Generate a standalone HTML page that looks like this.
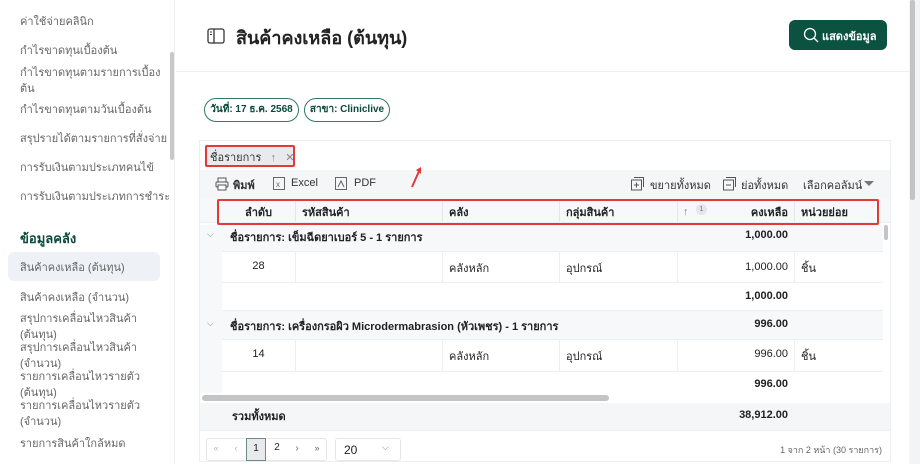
<!DOCTYPE html>
<html><head><meta charset="utf-8"><style>
*{box-sizing:border-box;margin:0;padding:0}
body{width:920px;height:464px;overflow:hidden;background:#fff;font-family:"Liberation Sans","Noto Sans CJK SC",sans-serif;position:relative;color:#222}
.a{position:absolute;white-space:nowrap}
.sb{font-size:11px;color:#666;left:20px;transform:translateY(-1px)}
.b{font-weight:bold}
.cell{position:absolute;font-size:11px;color:#222;white-space:nowrap;transform:translateY(-2px)}
</style></head><body>
<!-- sidebar -->
<div class="a" style="left:0;top:0;width:175px;height:464px;border-right:1px solid #eceef1"></div>
<div class="a" style="left:170px;top:52px;width:4px;height:108px;background:#c8c8c8;border-radius:2px"></div>
<div class="a sb" style="top:13px">ค่าใช้จ่ายคลินิก</div>
<div class="a sb" style="top:42px">กำไรขาดทุนเบื้องต้น</div>
<div class="a sb" style="top:64px">กำไรขาดทุนตามรายการเบื้อง</div>
<div class="a sb" style="top:80px">ต้น</div>
<div class="a sb" style="top:101px">กำไรขาดทุนตามวันเบื้องต้น</div>
<div class="a sb" style="top:130px">สรุปรายได้ตามรายการที่สั่งจ่าย</div>
<div class="a sb" style="top:159px">การรับเงินตามประเภทคนไข้</div>
<div class="a sb" style="top:188px">การรับเงินตามประเภทการชำระ</div>
<div class="a b" style="left:20px;top:228px;font-size:13px;color:#0b4a3a">ข้อมูลคลัง</div>
<div class="a" style="left:8px;top:252px;width:152px;height:29px;background:#eef1f5;border-radius:6px"></div>
<div class="a sb" style="top:259px">สินค้าคงเหลือ (ต้นทุน)</div>
<div class="a sb" style="top:289px">สินค้าคงเหลือ (จำนวน)</div>
<div class="a sb" style="top:310px">สรุปการเคลื่อนไหวสินค้า</div>
<div class="a sb" style="top:326px">(ต้นทุน)</div>
<div class="a sb" style="top:339px">สรุปการเคลื่อนไหวสินค้า</div>
<div class="a sb" style="top:355px">(จำนวน)</div>
<div class="a sb" style="top:368px">รายการเคลื่อนไหวรายตัว</div>
<div class="a sb" style="top:384px">(ต้นทุน)</div>
<div class="a sb" style="top:397px">รายการเคลื่อนไหวรายตัว</div>
<div class="a sb" style="top:413px">(จำนวน)</div>
<div class="a sb" style="top:435px">รายการสินค้าใกล้หมด</div>
<!-- page scrollbar -->
<div class="a" style="left:909px;top:0;width:11px;height:464px;background:#f3f4f6"></div>
<div class="a" style="left:910px;top:0;width:5px;height:200px;background:#c4c4c4;border-radius:2px"></div>
<!-- header -->
<div class="a" style="left:176px;top:71px;width:733px;height:1px;background:#eceef1"></div>
<svg class="a" style="left:207px;top:28px" width="18" height="16" viewBox="0 0 18 16"><rect x="1" y="1" width="16" height="14" rx="2" fill="none" stroke="#333" stroke-width="1.3"/><line x1="7" y1="1" x2="7" y2="15" stroke="#333" stroke-width="1.3"/><line x1="3" y1="4" x2="5" y2="4" stroke="#333"/><line x1="3" y1="6.5" x2="5" y2="6.5" stroke="#333"/></svg>
<div class="a b" style="left:236px;top:23px;font-size:18px;color:#222">สินค้าคงเหลือ (ต้นทุน)</div>
<div class="a" style="left:789px;top:20px;width:98px;height:30px;background:#0b5240;border-radius:6px"></div>
<svg class="a" style="left:803px;top:27px" width="16" height="16" viewBox="0 0 16 16"><circle cx="7" cy="7" r="5.5" fill="none" stroke="#fff" stroke-width="1.3"/><line x1="11" y1="11" x2="15" y2="15" stroke="#fff" stroke-width="1.3"/></svg>
<div class="a b" style="left:822px;top:27px;font-size:11px;color:#fff">แสดงข้อมูล</div>
<!-- chips -->
<div class="a b" style="left:204px;top:98px;width:95px;height:24px;border:1.3px solid #2f7a62;border-radius:12px;font-size:10px;color:#0b4a3a;text-align:center;line-height:21px">วันที่: 17 ธ.ค. 2568</div>
<div class="a b" style="left:304px;top:98px;width:86px;height:24px;border:1.3px solid #2f7a62;border-radius:12px;font-size:10px;color:#0b4a3a;text-align:center;line-height:21px">สาขา: Cliniclive</div>
<!-- table container -->
<div class="a" style="left:199px;top:140px;width:692px;height:322px;border:1px solid #eceef1"></div>
<div class="a" style="left:200px;top:170px;width:690px;height:29px;background:#f5f6f8"></div>
<div class="a" style="left:205px;top:145px;width:90px;height:22px;background:#e8eaee;border:2px solid #e53935;border-radius:2px"></div>
<div class="a" style="left:210px;top:148px;font-size:11px;color:#333">ชื่อรายการ&nbsp;&nbsp;&nbsp;<span style="color:#888">↑</span>&nbsp;&nbsp;&nbsp;<span style="color:#888">✕</span></div>
<svg class="a" style="left:408px;top:165px" width="16" height="24" viewBox="0 0 16 24"><line x1="4" y1="22" x2="12" y2="4" stroke="#e53935" stroke-width="2"/><path d="M8 5 L13 2 L13 9 Z" fill="#e53935"/></svg>
<!-- toolbar -->
<svg class="a" style="left:215px;top:177px" width="14" height="14" viewBox="0 0 14 14"><rect x="3" y="1" width="8" height="4" fill="none" stroke="#555"/><rect x="1" y="5" width="12" height="5" rx="1" fill="none" stroke="#555"/><rect x="3" y="8" width="8" height="5" fill="#fff" stroke="#555"/></svg>
<div class="a b" style="left:233px;top:176px;font-size:11px;color:#333">พิมพ์</div>
<svg class="a" style="left:273px;top:177px" width="12" height="13"><rect x="0.5" y="0.5" width="11" height="12" fill="none" stroke="#666"/><text x="3" y="10" font-size="8" fill="#666" font-family="Liberation Sans">x</text></svg>
<div class="a" style="left:291px;top:177px;font-size:11px;color:#333">Excel</div>
<svg class="a" style="left:335px;top:177px" width="12" height="13"><rect x="0.5" y="0.5" width="11" height="12" fill="none" stroke="#666"/><path d="M3 10 L6 4 L9 10" fill="none" stroke="#666"/></svg>
<div class="a" style="left:354px;top:177px;font-size:11px;color:#333">PDF</div>
<svg class="a" style="left:631px;top:177px" width="13" height="14"><rect x="0.5" y="3" width="10" height="10" fill="none" stroke="#555"/><path d="M3 0.5 H12.5 V10" fill="none" stroke="#555"/><path d="M5.5 5.5 V10.5 M3 8 H8" stroke="#555"/></svg>
<div class="a" style="left:650px;top:176px;font-size:11px;color:#333">ขยายทั้งหมด</div>
<svg class="a" style="left:723px;top:177px" width="13" height="14"><rect x="0.5" y="3" width="10" height="10" fill="none" stroke="#555"/><path d="M3 0.5 H12.5 V10" fill="none" stroke="#555"/><path d="M3 8 H8" stroke="#555"/></svg>
<div class="a" style="left:741px;top:176px;font-size:11px;color:#333">ย่อทั้งหมด</div>
<div class="a" style="left:803px;top:176px;font-size:11px;color:#333">เลือกคอลัมน์</div>
<svg class="a" style="left:864px;top:181px" width="10" height="6"><path d="M0 0 L10 0 L5 5Z" fill="#777"/></svg>
<!-- header row -->
<div class="a" style="left:200px;top:199px;width:690px;height:24px;background:#f7f8fa;border-bottom:1px solid #eceef1"></div>
<div class="a" style="left:295px;top:200px;width:1px;height:22px;background:#e4e6ea"></div>
<div class="a" style="left:442px;top:200px;width:1px;height:22px;background:#e4e6ea"></div>
<div class="a" style="left:559px;top:200px;width:1px;height:22px;background:#e4e6ea"></div>
<div class="a" style="left:677px;top:200px;width:1px;height:22px;background:#e4e6ea"></div>
<div class="a" style="left:794px;top:200px;width:1px;height:22px;background:#e4e6ea"></div>
<div class="cell b" style="left:222px;width:73px;top:205px;text-align:center">ลำดับ</div>
<div class="cell b" style="left:302px;top:205px">รหัสสินค้า</div>
<div class="cell b" style="left:449px;top:205px">คลัง</div>
<div class="cell b" style="left:566px;top:205px">กลุ่มสินค้า</div>
<div class="cell" style="left:683px;top:208px;color:#888">↑</div>
<div class="a" style="left:696px;top:204px;width:11px;height:11px;border-radius:6px;background:#e4e6ea;font-size:7px;color:#777;text-align:center;line-height:11px">1</div>
<div class="cell b" style="left:677px;width:111px;top:205px;text-align:right">คงเหลือ</div>
<div class="cell b" style="left:801px;top:205px">หน่วยย่อย</div>
<div class="a" style="left:217px;top:199px;width:662px;height:26px;border:2px solid #e53935;border-radius:2px"></div>
<div class="a" style="left:884px;top:225px;width:4px;height:15px;background:#c4c4c4;border-radius:2px"></div>
<!-- body -->
<div class="a" style="left:200px;top:225px;width:683px;height:169px;background:#f7f8fa"></div>
<!-- group1 -->
<div class="cell" style="left:207px;top:231px;color:#888;font-size:9px">⌵</div>
<div class="cell b" style="left:230px;top:230px">ชื่อรายการ: เข็มฉีดยาเบอร์ 5 - 1 รายการ</div>
<div class="cell b" style="left:677px;width:111px;top:231px;text-align:right">1,000.00</div>
<div class="a" style="left:222px;top:251px;width:661px;height:32px;background:#fff;border-top:1px solid #eceef1;border-bottom:1px solid #eceef1"></div>
<div class="a" style="left:222px;top:283px;width:661px;height:28px;background:#fff;border-bottom:1px solid #eceef1"></div>
<div class="cell" style="left:222px;width:73px;top:262px;text-align:center">28</div>
<div class="cell" style="left:449px;top:261px">คลังหลัก</div>
<div class="cell" style="left:566px;top:261px">อุปกรณ์</div>
<div class="cell" style="left:677px;width:111px;top:263px;text-align:right">1,000.00</div>
<div class="cell" style="left:801px;top:261px">ชิ้น</div>
<div class="cell b" style="left:677px;width:111px;top:292px;text-align:right">1,000.00</div>
<!-- group2 -->
<div class="cell" style="left:207px;top:320px;color:#888;font-size:9px">⌵</div>
<div class="cell b" style="left:230px;top:319px">ชื่อรายการ: เครื่องกรอผิว Microdermabrasion (หัวเพชร) - 1 รายการ</div>
<div class="cell b" style="left:677px;width:111px;top:320px;text-align:right">996.00</div>
<div class="a" style="left:222px;top:339px;width:661px;height:33px;background:#fff;border-top:1px solid #eceef1;border-bottom:1px solid #eceef1"></div>
<div class="a" style="left:222px;top:372px;width:661px;height:22px;background:#fff"></div>
<div class="cell" style="left:222px;width:73px;top:350px;text-align:center">14</div>
<div class="cell" style="left:449px;top:349px">คลังหลัก</div>
<div class="cell" style="left:566px;top:349px">อุปกรณ์</div>
<div class="cell" style="left:677px;width:111px;top:350px;text-align:right">996.00</div>
<div class="cell" style="left:801px;top:349px">ชิ้น</div>
<div class="cell b" style="left:677px;width:111px;top:380px;text-align:right">996.00</div>
<!-- row grid lines -->
<div class="a" style="left:295px;top:251px;width:1px;height:32px;background:#eceef1"></div>
<div class="a" style="left:442px;top:251px;width:1px;height:32px;background:#eceef1"></div>
<div class="a" style="left:559px;top:251px;width:1px;height:32px;background:#eceef1"></div>
<div class="a" style="left:677px;top:251px;width:1px;height:32px;background:#eceef1"></div>
<div class="a" style="left:794px;top:251px;width:1px;height:32px;background:#eceef1"></div>
<div class="a" style="left:295px;top:339px;width:1px;height:33px;background:#eceef1"></div>
<div class="a" style="left:442px;top:339px;width:1px;height:33px;background:#eceef1"></div>
<div class="a" style="left:559px;top:339px;width:1px;height:33px;background:#eceef1"></div>
<div class="a" style="left:677px;top:339px;width:1px;height:33px;background:#eceef1"></div>
<div class="a" style="left:794px;top:339px;width:1px;height:33px;background:#eceef1"></div>
<!-- hscroll -->
<div class="a" style="left:200px;top:393px;width:683px;height:10px;background:#fff"></div>
<div class="a" style="left:202px;top:395px;width:407px;height:6px;background:#c4c4c4;border-radius:3px"></div>
<!-- total -->
<div class="a" style="left:200px;top:403px;width:690px;height:28px;background:#f5f6f8;border-bottom:1px solid #eceef1"></div>
<div class="cell b" style="left:232px;top:409px">รวมทั้งหมด</div>
<div class="cell b" style="left:677px;width:111px;top:411px;text-align:right">38,912.00</div>
<!-- pagination -->
<div class="a" style="left:206px;top:438px;width:121px;height:23px;border:1px solid #e4e6ea;border-radius:3px"></div>
<div class="a" style="left:206px;top:443px;width:20px;font-size:9px;color:#bbb;text-align:center">«</div>
<div class="a" style="left:226px;top:443px;width:20px;font-size:9px;color:#bbb;text-align:center">‹</div>
<div class="a" style="left:246px;top:438px;width:20px;height:23px;border:1.5px solid #6a8f82;background:#e8eaee;font-size:10px;text-align:center;line-height:20px">1</div>
<div class="a" style="left:267px;top:442px;width:20px;font-size:10px;text-align:center">2</div>
<div class="a" style="left:287px;top:443px;width:20px;font-size:10px;color:#666;text-align:center">›</div>
<div class="a" style="left:307px;top:443px;width:20px;font-size:9px;color:#666;text-align:center">»</div>
<div class="a" style="left:335px;top:438px;width:66px;height:23px;border:1px solid #e4e6ea;border-radius:3px"></div>
<div class="a" style="left:344px;top:443px;font-size:12px">20</div>
<div class="a" style="left:382px;top:442px;font-size:9px;color:#777">⌵</div>
<div class="a" style="left:760px;top:443px;width:122px;font-size:9px;color:#666;text-align:right">1 จาก 2 หน้า (30 รายการ)</div>
</body></html>
